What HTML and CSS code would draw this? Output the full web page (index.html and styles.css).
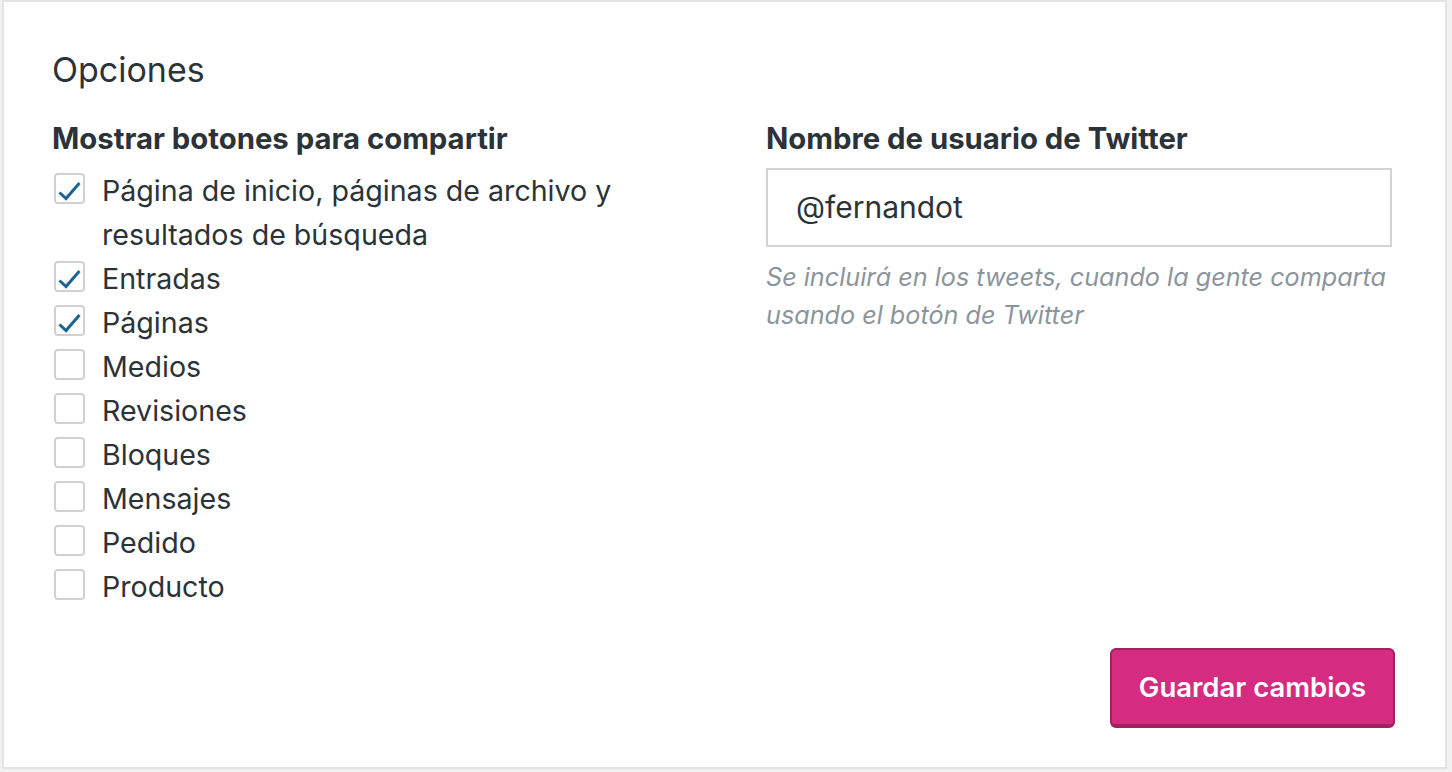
FILE: index.html
```html
<!DOCTYPE html>
<html lang="es">
<head>
    <meta charset="UTF-8">
    <meta name="viewport" content="width=device-width, initial-scale=1.0">
    <title>Opciones</title>
    <link rel="stylesheet" href="styles.css">
</head>
<body>
    <div class="card">
        <h2 class="card-title">Opciones</h2>

        <div class="columns">
            <fieldset class="group">
                <legend class="group-label">Mostrar botones para compartir</legend>
                <div class="check-list">
                    <label class="check">
                        <span class="box checked"><svg viewBox="0 0 31 31"><polyline points="5.5,19.5 12,25.5 25.5,10" /></svg></span>
                        <span>Página de inicio, páginas de archivo y resultados de búsqueda</span>
                    </label>
                    <label class="check">
                        <span class="box checked"><svg viewBox="0 0 31 31"><polyline points="5.5,19.5 12,25.5 25.5,10" /></svg></span>
                        <span>Entradas</span>
                    </label>
                    <label class="check">
                        <span class="box checked"><svg viewBox="0 0 31 31"><polyline points="5.5,19.5 12,25.5 25.5,10" /></svg></span>
                        <span>Páginas</span>
                    </label>
                    <label class="check"><span class="box"></span><span>Medios</span></label>
                    <label class="check"><span class="box"></span><span>Revisiones</span></label>
                    <label class="check"><span class="box"></span><span>Bloques</span></label>
                    <label class="check"><span class="box"></span><span>Mensajes</span></label>
                    <label class="check"><span class="box"></span><span>Pedido</span></label>
                    <label class="check"><span class="box"></span><span>Producto</span></label>
                </div>
            </fieldset>

            <div class="group">
                <label class="group-label" for="twitter">Nombre de usuario de Twitter</label>
                <div class="text-input" id="twitter">@fernandot</div>
                <p class="help">Se incluirá en los tweets, cuando la gente comparta usando el botón de Twitter</p>
            </div>
        </div>

        <div class="actions">
            <button class="save">Guardar cambios</button>
        </div>
    </div>
</body>
</html>
```

FILE: styles.css
```css
body {
    margin: 0;
    padding: 0 5px 3px 2px;
    background-color: #f1f1f1;
    font-family: Inter, "Liberation Sans", sans-serif;
    color: #2c3338;
}
.card {
    background-color: #ffffff;
    border: 2px solid #e2e3e4;
    padding: 46px 53px 38px 48px;
    height: 769px;
    box-sizing: border-box;
}
.card-title {
    margin: 0;
    font-size: 34px;
    font-weight: 400;
    line-height: 44px;
}
.columns {
    display: grid;
    grid-template-columns: 1fr 626px;
    margin-top: 30px;
}
.group {
    margin: 0;
    padding: 0;
    border: none;
    min-width: 0;
}
.group-label {
    display: block;
    padding: 0;
    margin-bottom: 12px;
    font-size: 29.3px;
    font-weight: 700;
    line-height: 34px;
}
.check-list {
    padding-top: 1px;
}
.check {
    display: flex;
    align-items: flex-start;
    font-size: 28.6px;
    line-height: 44px;
    max-width: 600px;
}
.box {
    flex: none;
    width: 31px;
    height: 31px;
    margin: 4px 17px 0 2px;
    border: 2px solid #cfd1d3;
    border-radius: 4px;
    box-sizing: border-box;
}
.box svg {
    display: block;
    width: 31px;
    height: 31px;
    margin: -2px;
    fill: none;
    stroke: #1b6590;
    stroke-width: 3;
}
.text-input {
    height: 79px;
    border: 2px solid #d2d4d6;
    box-sizing: border-box;
    padding: 0 28px;
    font-size: 30px;
    line-height: 75px;
}
.help {
    margin: 11px 0 0;
    font-size: 25.2px;
    font-style: italic;
    line-height: 38px;
    color: #8c959c;
}
.actions {
    display: flex;
    justify-content: flex-end;
    margin-top: 39px;
    margin-right: -3px;
}
.save {
    width: 285px;
    height: 80px;
    background-color: #d52c82;
    border: 2px solid #a02060;
    border-bottom-width: 4px;
    border-radius: 6px;
    color: #ffffff;
    font-family: Inter, "Liberation Sans", sans-serif;
    font-size: 27.5px;
    font-weight: 600;
    cursor: pointer;
}
```
